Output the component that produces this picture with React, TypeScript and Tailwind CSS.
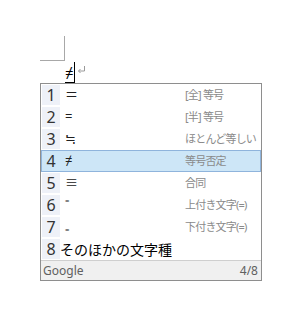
const CANDIDATES = [
  { n: "1", sym: "＝", desc: "[全] 等号" },
  { n: "2", sym: "=", desc: "[半] 等号" },
  { n: "3", sym: "≒", desc: "ほとんど等しい" },
  { n: "4", sym: "≠", desc: "等号否定", active: true },
  { n: "5", sym: "≡", desc: "合同" },
  { n: "6", sym: "⁼", desc: "上付き文字(=)" },
  { n: "7", sym: "₌", desc: "下付き文字(=)" },
  { n: "8", sym: "そのほかの文字種", desc: "" },
];

const font = "font-['Noto_Sans','Noto_Sans_CJK_JP',sans-serif]";

export default function App() {
  return (
    <div className={`relative h-[328px] w-[306px] bg-white ${font}`}>
      {/* page margin corner */}
      <div className="absolute left-[40px] top-[36px] h-[25px] w-[25px] border-b border-r border-[#a8a8a8]" />

      {/* composing text */}
      <div className="absolute left-[65px] top-[62px] flex h-[22px] items-end">
        <span className="border-b-[2px] border-black pb-[1px] text-[15px] leading-[18px] text-black">≠</span>
        <span className="h-[22px] w-px bg-black" />
        <svg width="9" height="9" viewBox="0 0 9 9" className="mb-[10px] ml-[2px]">
          <path d="M7.5 1v5H1.5M3.5 4l-2 2 2 2" fill="none" stroke="#9a9a9a" strokeWidth="1" />
        </svg>
      </div>

      {/* candidate window */}
      <div className="absolute left-[40px] top-[83px] w-[222px] border border-[#8e8e8e] bg-white">
        {CANDIDATES.map((c) => (
          <div
            key={c.n}
            className={`flex h-[22px] items-center ${
              c.active ? "border border-[#8fb4dc] bg-[#cde6f7]" : "border border-transparent"
            }`}
          >
            <div
              className={`flex h-full w-[18px] shrink-0 items-center justify-center text-[16px] text-[#333] ${
                c.active ? "" : "bg-[#eef1f8]"
              }`}
            >
              {c.n}
            </div>
            {c.n === "8" ? (
              <div className="whitespace-nowrap text-[14px] text-black">{c.sym}</div>
            ) : (
              <>
                <div className="w-[125px] shrink-0 pl-[5px] text-[13px] text-[#202020]">{c.sym}</div>
                <div className="whitespace-nowrap text-[11px] tracking-[-0.8px] text-[#8a8a8a]">{c.desc}</div>
              </>
            )}
          </div>
        ))}
        <div className="flex h-[20px] items-center justify-between border-t border-[#cfcfcf] bg-[#f0f0f0] px-[2px] text-[12px] text-[#606060]">
          <span>Google</span>
          <span className="pr-[1px]">4/8</span>
        </div>
      </div>
    </div>
  );
}
